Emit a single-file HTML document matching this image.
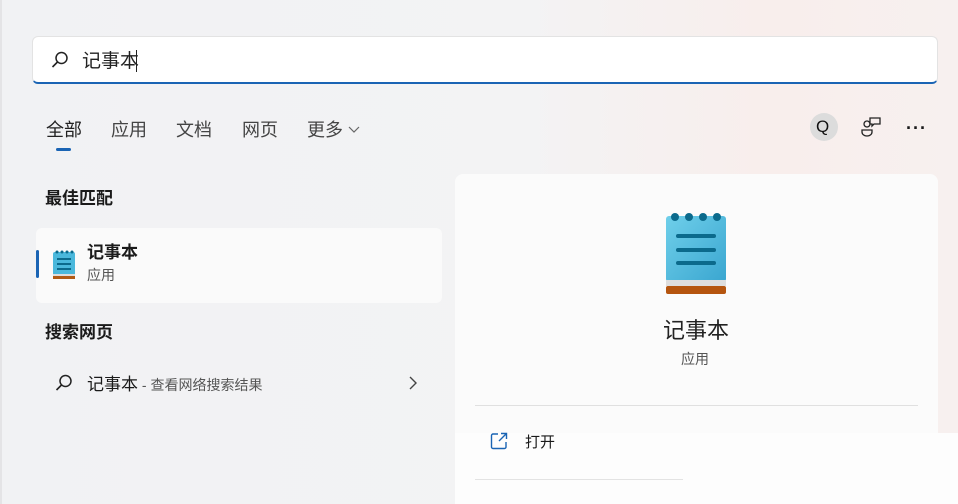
<!DOCTYPE html><html><head><meta charset="utf-8"><style>
body{margin:0;width:958px;height:504px;overflow:hidden;font-family:"Liberation Sans","Noto Sans CJK SC",sans-serif;background:linear-gradient(90deg,#f1f2f4 0%,#f3f3f4 55%,#f8eeec 80%,#f7f0ef 100%);position:relative;color:#1a1a1a}
.a{position:absolute}
.search{left:32px;top:36px;width:906px;height:48px;background:#fff;border:1px solid #e3e3e3;border-bottom:2px solid #1a64b4;border-radius:6px;box-sizing:border-box}
.tab{top:116px;font-size:18px;color:#444}
</style></head><body>
<div class="a" style="left:0;top:0;width:2px;height:504px;background:#e4e4e6"></div>
<div class="a search"></div>
<svg class="a" style="left:50px;top:50px" width="20" height="20" viewBox="0 0 20 20"><circle cx="11.5" cy="8" r="5.5" fill="none" stroke="#222" stroke-width="1.5"/><path d="M7.5 12 L2.5 17" stroke="#222" stroke-width="1.6"/></svg>
<div class="a" style="left:82px;top:46px;font-size:19px;color:#222">记事本</div>
<div class="a" style="left:136px;top:50px;width:1px;height:22px;background:#222"></div>
<div class="a tab" style="left:46px;color:#222">全部</div>
<div class="a" style="left:56px;top:148px;width:15px;height:3px;border-radius:2px;background:#1a64b4"></div>
<div class="a tab" style="left:111px">应用</div>
<div class="a tab" style="left:176px">文档</div>
<div class="a tab" style="left:242px">网页</div>
<div class="a tab" style="left:307px">更多</div>
<svg class="a" style="left:348px;top:126px" width="12" height="8"><path d="M1 1 L6 6 L11 1" fill="none" stroke="#666" stroke-width="1.2"/></svg>
<div class="a" style="left:810px;top:113px;width:28px;height:28px;border-radius:50%;background:#dcdcdc"></div>
<div class="a" style="left:816px;top:117px;font-size:17px;color:#111">Q</div>
<svg class="a" style="left:860px;top:115px" width="24" height="24" viewBox="0 0 24 24" fill="none" stroke="#222" stroke-width="1.3"><circle cx="7" cy="9" r="3"/><path d="M2 15 h10 v2 a5 4 0 0 1 -10 0z"/><path d="M10 3 h10 v6 h-6 l-2 2 v-2 h-2z"/></svg>
<div class="a" style="left:906px;top:118px;font-size:18px;letter-spacing:1px;font-weight:bold">···</div>
<div class="a" style="left:45px;top:184px;font-size:17px;font-weight:bold">最佳匹配</div>
<div class="a" style="left:36px;top:228px;width:406px;height:75px;background:#fafafa;border-radius:6px"></div>
<div class="a" style="left:36px;top:250px;width:3px;height:28px;background:#1a64b4;border-radius:2px"></div>
<svg class="a" style="left:52px;top:249px" width="24" height="31" viewBox="0 0 24 31"><rect x="1" y="3" width="22" height="24" rx="2" fill="#4ab8dc"/><rect x="1" y="25" width="22" height="2" fill="#ddd"/><rect x="1" y="27" width="22" height="3" fill="#b05a15"/><g fill="#0b6a8c"><circle cx="5" cy="3" r="1.5"/><circle cx="10" cy="3" r="1.5"/><circle cx="15" cy="3" r="1.5"/><circle cx="20" cy="3" r="1.5"/><rect x="5" y="9" width="14" height="2"/><rect x="5" y="14" width="14" height="2"/><rect x="5" y="19" width="14" height="2"/></g></svg>
<div class="a" style="left:87px;top:238px;font-size:17px;font-weight:bold">记事本</div>
<div class="a" style="left:87px;top:265px;font-size:14px;color:#555">应用</div>
<div class="a" style="left:45px;top:318px;font-size:17px;font-weight:bold">搜索网页</div>
<svg class="a" style="left:54px;top:373px" width="20" height="20" viewBox="0 0 20 20"><circle cx="11.5" cy="8" r="5.5" fill="none" stroke="#222" stroke-width="1.5"/><path d="M7.5 12 L2.5 17" stroke="#222" stroke-width="1.6"/></svg>
<div class="a" style="left:87px;top:370px;font-size:17px">记事本<span style="font-size:14px;color:#555"> - 查看网络搜索结果</span></div>
<svg class="a" style="left:408px;top:376px" width="10" height="14"><path d="M2 1 L8 7 L2 13" fill="none" stroke="#444" stroke-width="1.4"/></svg>
<div class="a" style="left:455px;top:174px;width:483px;height:260px;background:#fbfbfb;border-radius:8px 8px 0 0"></div>
<div class="a" style="left:455px;top:433px;width:503px;height:71px;background:#fdfdfd"></div>
<svg class="a" style="left:665px;top:212px" width="62" height="83" viewBox="0 0 62 83"><defs><linearGradient id="g" x1="0" y1="0" x2="1" y2="1"><stop offset="0" stop-color="#6fcfea"/><stop offset="1" stop-color="#3aa6d0"/></linearGradient></defs><rect x="1" y="4" width="60" height="66" rx="3" fill="url(#g)"/><rect x="1" y="68" width="60" height="6" fill="#dedede"/><rect x="1" y="74" width="60" height="8" rx="2" fill="#b5550f"/><g fill="#0b6a8c"><circle cx="10" cy="5" r="4"/><circle cx="24" cy="5" r="4"/><circle cx="38" cy="5" r="4"/><circle cx="52" cy="5" r="4"/><rect x="11" y="22" width="40" height="4" rx="2"/><rect x="11" y="36" width="40" height="4" rx="2"/><rect x="11" y="49" width="40" height="4" rx="2"/></g></svg>
<div class="a" style="left:663px;top:313px;font-size:22px;color:#222">记事本</div>
<div class="a" style="left:681px;top:349px;font-size:14px;color:#555">应用</div>
<div class="a" style="left:475px;top:405px;width:443px;height:1px;background:#e0e0e0"></div>
<svg class="a" style="left:490px;top:432px" width="18" height="18" viewBox="0 0 18 18" fill="none" stroke="#1a64b4" stroke-width="1.4"><path d="M8 2 H3 a1.5 1.5 0 0 0 -1.5 1.5 V15 a1.5 1.5 0 0 0 1.5 1.5 H14.5 a1.5 1.5 0 0 0 1.5 -1.5 V10"/><path d="M11 1.5 H16.5 V7 M16.5 1.5 L9 9"/></svg>
<div class="a" style="left:525px;top:431px;font-size:15px">打开</div>
<div class="a" style="left:475px;top:479px;width:208px;height:1px;background:#e3e3e3"></div>
</body></html>
